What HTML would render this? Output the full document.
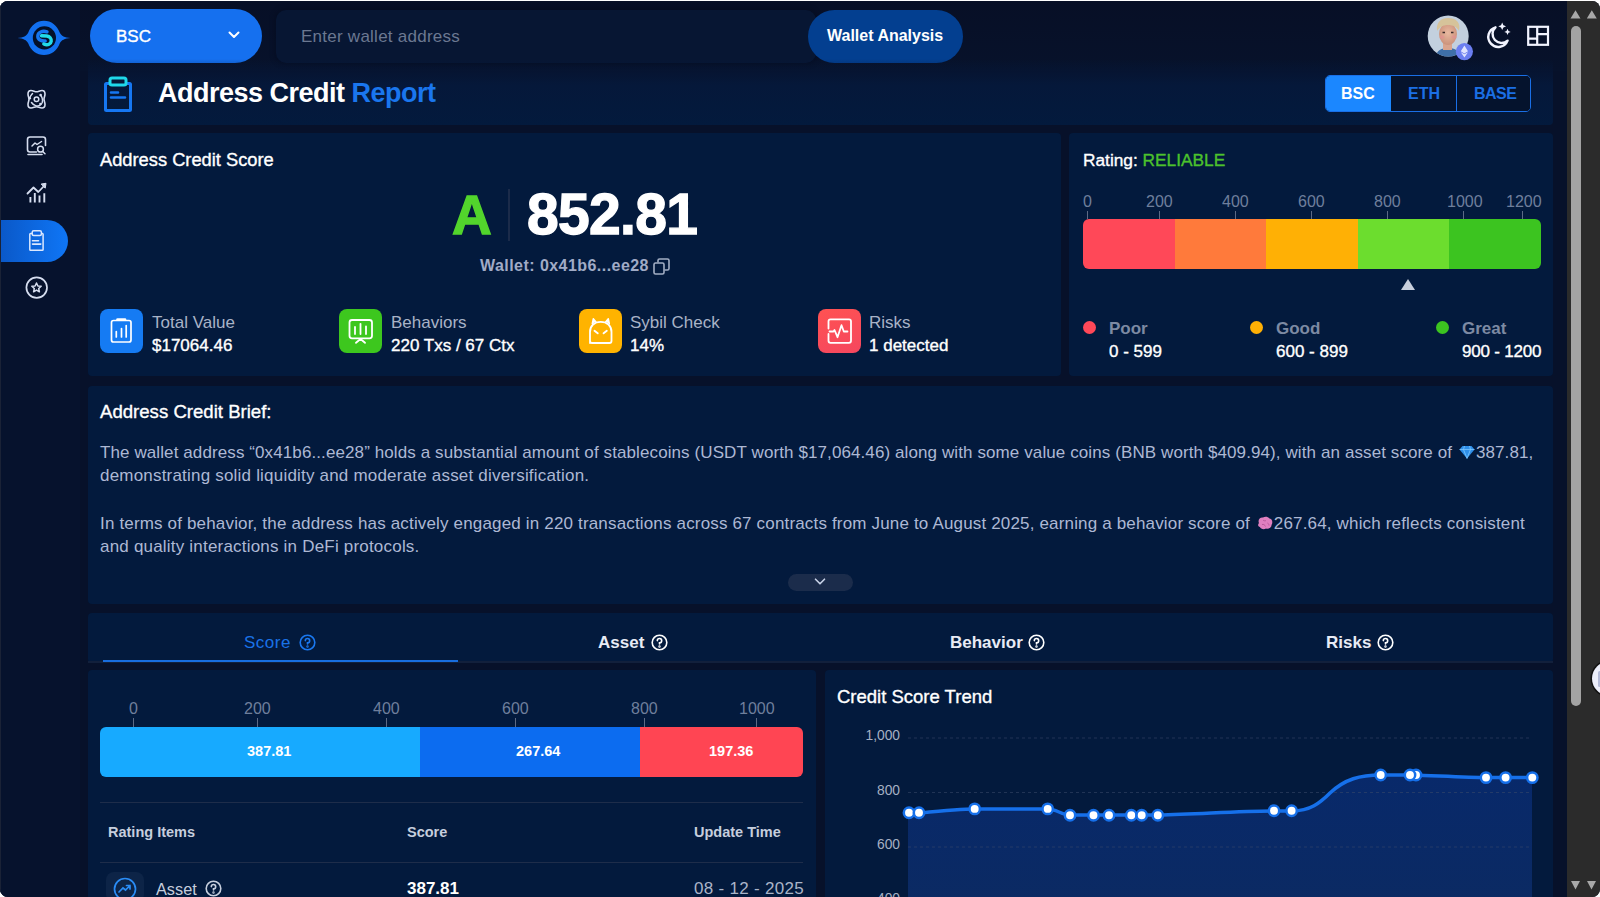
<!DOCTYPE html>
<html><head><meta charset="utf-8">
<style>
*{box-sizing:border-box;margin:0;padding:0}
html,body{width:1600px;height:897px;overflow:hidden;background:#fff;font-family:"Liberation Sans",sans-serif}
#win{position:absolute;left:0;top:1px;width:1600px;height:896px;border-radius:8px;overflow:hidden;background:#08132b;box-shadow:inset 1px 0 0 #1c2438}
.abs{position:absolute}
#side{left:0;top:0;width:80px;height:896px;background:#06122d}
#main{left:80px;top:0;width:1487px;height:896px;background:#07112a}
.card{position:absolute;background:#031a3d;border-radius:4px}
.t{position:absolute;white-space:nowrap;line-height:1}
.m{-webkit-text-stroke:0.35px currentColor}
#sb{left:1567px;top:0;width:33px;height:896px;background:#2b2b2b}
svg{position:absolute;overflow:visible}
</style></head><body>
<div id="win">
  <div id="side" class="abs"></div>
  <div id="main" class="abs"></div>

  <!-- TOPBAR -->
  <div class="abs" style="left:80px;top:0;width:1487px;height:70px;background:linear-gradient(180deg,#070f26 0,#07122b 100%)"></div>
  <!-- logo -->
  <svg style="left:0;top:0" width="80" height="70" viewBox="0 0 80 70">
    <path d="M17.5 37 C23.5 36.5 26.5 35 28.3 31.5 C30.8 24.5 36.8 19.8 44 19.8 C51.2 19.8 57.2 24.5 59.7 31.5 C61.5 35 64.5 36.5 70.5 37 C64.5 37.5 61.5 39 59.7 42.5 C57.2 49.5 51.2 54 44 54 C36.8 54 30.8 49.5 28.3 42.5 C26.5 39 23.5 37.5 17.5 37Z" fill="#1270f0"/>
    <circle cx="44.4" cy="36.9" r="11.6" fill="#041028"/>
    <path d="M47 30.8 C42.5 29.3 37.8 31.2 37.8 35.2 C37.8 38.7 41.2 40.2 45.2 40" stroke="#1577f2" stroke-width="3.4" fill="none" stroke-linecap="round"/>
    <path d="M41.5 34.8 L46.8 35 C49.8 35.4 51.5 37.6 51.2 40.3 C50.8 43.3 47.5 44.6 43.8 43" stroke="#22dbe8" stroke-width="3.4" fill="none" stroke-linecap="round"/>
  </svg>
  <!-- BSC pill -->
  <div class="abs" style="left:90px;top:8px;width:172px;height:54px;border-radius:27px;background:#1570ef"></div>
  <div class="t m" style="left:116px;top:27px;font-size:17px;color:#fff">BSC</div>
  <svg style="left:228px;top:30px" width="12" height="8" viewBox="0 0 12 8"><path d="M1.5 1.5 L6 6 L10.5 1.5" stroke="#fff" stroke-width="2" fill="none" stroke-linecap="round" stroke-linejoin="round"/></svg>
  <!-- input -->
  <div class="abs" style="left:276px;top:9px;width:540px;height:53px;background:#071633;border-radius:10px;box-shadow:0 0 5px 1px rgba(4,10,28,0.5)"></div>
  <div class="t" style="left:301px;top:27px;font-size:17px;color:#6b7891;letter-spacing:0.25px">Enter wallet address</div>
  <!-- wallet analysis -->
  <div class="abs" style="left:808px;top:9px;width:155px;height:53px;border-radius:27px;background:#033f90"></div>
  <div class="t" style="left:827px;top:27px;font-size:16px;font-weight:bold;color:#fff">Wallet Analysis</div>

  <!-- avatar -->
  <svg style="left:1420px;top:8px" width="140" height="56" viewBox="1420 8 140 56">
    <defs><clipPath id="avc"><circle cx="1448.2" cy="35" r="20.5"/></clipPath>
    <radialGradient id="skin" cx="0.5" cy="0.45" r="0.6"><stop offset="0" stop-color="#e8b9a0"/><stop offset="1" stop-color="#c98f78"/></radialGradient></defs>
    <g clip-path="url(#avc)">
      <rect x="1427" y="14" width="42" height="42" fill="#c3d0de"/>
      <path d="M1436 56 C1436 50 1441 47 1448 47 C1455 47 1460 50 1460 56Z" fill="#3f6fa8"/>
      <rect x="1443" y="41" width="9" height="8" fill="#d9a48e"/>
      <ellipse cx="1448" cy="33" rx="9" ry="11" fill="url(#skin)"/>
      <path d="M1437 30 C1436 21 1441 17 1448 17 C1456 17 1461 21 1459 30 C1457 26 1453 24 1448 24 C1443 24 1440 26 1437 30Z" fill="#d6c39a"/>
      <path d="M1442.5 31.5 H1445 M1451 31.5 H1453.5" stroke="#3a2a2a" stroke-width="1.4"/>
      <ellipse cx="1442" cy="36" rx="2.5" ry="1.8" fill="#e48f92" opacity="0.6"/>
      <ellipse cx="1454" cy="36" rx="2.5" ry="1.8" fill="#e48f92" opacity="0.6"/>
    </g>
    <circle cx="1464.4" cy="50.6" r="8.6" fill="#6b7ef0"/>
    <path d="M1464.4 44.5 L1468 50.3 L1464.4 52.4 L1460.8 50.3Z M1464.4 53.3 L1468 51.2 L1464.4 56.5 L1460.8 51.2Z" fill="#dfe3ff"/>
    <!-- moon -->
    <path d="M1495.5 26.3 A10 10 0 1 0 1507.6 39.6 A8.6 8.6 0 0 1 1495.5 26.3Z" stroke="#f2f4ff" stroke-width="2.4" fill="none" stroke-linejoin="round"/>
    <path d="M1502.2 21.5 L1503.4 24.2 L1506.1 25.3 L1503.4 26.4 L1502.2 29.1 L1501 26.4 L1498.3 25.3 L1501 24.2Z" fill="#f2f4ff"/>
    <path d="M1507.5 27.8 L1508.5 30 L1510.7 30.9 L1508.5 31.8 L1507.5 34 L1506.5 31.8 L1504.3 30.9 L1506.5 30Z" fill="#f2f4ff"/>
    <!-- layout -->
    <rect x="1528.2" y="25.8" width="19.8" height="18" fill="none" stroke="#f2f4ff" stroke-width="2.2"/>
    <path d="M1537.2 25.8 V43.8 M1528.2 37.6 H1537.2 M1537.2 33.2 H1548" stroke="#f2f4ff" stroke-width="2.2"/>
  </svg>

  <!-- SIDEBAR ICONS -->


  <!-- sidebar icons -->
  <div class="abs" style="left:0;top:219px;width:68px;height:42px;border-radius:0 21px 21px 0;background:linear-gradient(90deg,#0a58c8,#0f76f6)"></div>
  <svg style="left:0;top:0" width="80" height="320" viewBox="0 0 80 320" fill="none" stroke="#d6def0" stroke-linecap="round" stroke-linejoin="round">
    <!-- icon1 atom -->
    <path d="M31 89.5 C33.5 89.5 34.5 90.8 36.5 90.8 C38.5 90.8 39.5 89.5 42 89.5 C44.5 89.5 45 90.5 45 93 C45 95.5 44 96.5 44 98.3 C44 100 45 101 45 103.5 C45 106 44.5 107 42 107 C39.5 107 38.5 105.8 36.5 105.8 C34.5 105.8 33.5 107 31 107 C28.5 107 28 106 28 103.5 C28 101 29 100 29 98.3 C29 96.5 28 95.5 28 93 C28 90.5 28.5 89.5 31 89.5Z" stroke-width="1.6"/>
    <circle cx="36.5" cy="98.3" r="2.3" stroke-width="1.5"/>
    <path d="M31.5 101.5 C33.5 104.5 37.5 106 40.5 104 C43.5 102 43 97 40.5 94" stroke-width="1.5"/>
    <path d="M29.5 97.3 C30.5 94.5 31.5 93.5 32.5 92.5" stroke-width="1.5"/>
    <circle cx="40.6" cy="94" r="1.3" fill="#d6def0" stroke="none"/>
    <circle cx="40.4" cy="103" r="1.3" fill="#d6def0" stroke="none"/>
    <circle cx="29.7" cy="97.3" r="1.3" fill="#d6def0" stroke="none"/>
    <!-- icon2 monitor search -->
    <path d="M36.5 151 H30 A2.5 2.5 0 0 1 27.5 148.5 V138.5 A2.5 2.5 0 0 1 30 136 H43 A2.5 2.5 0 0 1 45.5 138.5 V144.5" stroke-width="1.6"/>
    <path d="M28 153.5 H42" stroke-width="1.6"/>
    <path d="M32 145 L35 142 L37 143.5 L41.5 140.5" stroke-width="1.5"/>
    <circle cx="40.5" cy="148.2" r="2.9" stroke-width="1.5"/>
    <path d="M42.7 150.5 L45 152.8" stroke-width="1.5"/>
    <!-- icon3 chart -->
    <path d="M30.4 196 V201.5 M34.8 192 V201.5 M39.5 194.5 V201.5 M44.3 192.2 V201.5" stroke-width="1.9" stroke-linecap="butt"/>
    <path d="M27.5 192.5 L33.5 186.5 L38.3 191 L44 185" stroke-width="1.8"/>
    <path d="M41.5 183 L46 182.3 L45.3 186.8Z" fill="#d6def0" stroke-width="1"/>
    <!-- icon4 clipboard -->
    <rect x="29.8" y="232.5" width="13.3" height="16.7" rx="0.8" stroke="#dbe8ff" stroke-width="1.5"/>
    <rect x="32.2" y="229.8" width="9.2" height="4.6" rx="1.5" stroke="#dbe8ff" stroke-width="1.5" fill="#0d66e6"/>
    <path d="M32.5 239.7 H38.5 M32.5 243.1 H40.8" stroke="#dbe8ff" stroke-width="1.6"/>
    <!-- icon5 star -->
    <circle cx="36.7" cy="286.6" r="10.3" stroke-width="1.7"/>
    <path d="M36.5 282 L37.9 285 L41.2 285.3 L38.7 287.5 L39.4 290.8 L36.5 289.1 L33.6 290.8 L34.3 287.5 L31.8 285.3 L35.1 285Z" stroke-width="1.5"/>
  </svg>

  <!-- HEADER CARD -->
  <div class="card" style="left:88px;top:58px;width:1465px;height:66px;background:linear-gradient(180deg,rgba(5,22,50,0) 0,#05183a 40%,#031a3d 100%);border-radius:0 0 4px 4px"></div>
  <svg style="left:102px;top:74px" width="32" height="38" viewBox="0 0 32 38" fill="none" stroke-linecap="round">
    <rect x="3.5" y="8.5" width="25" height="27" rx="1" stroke="#1677f2" stroke-width="3"/>
    <rect x="8" y="3" width="16" height="7" rx="2" stroke="#1fd8ea" stroke-width="3" fill="#071838"/>
    <path d="M9 17.5 H16 M9 22.5 H23" stroke="#1677f2" stroke-width="2.6"/>
  </svg>
  <div class="t" style="left:158px;top:79px;font-size:27px;font-weight:bold;color:#fff;letter-spacing:-0.5px">Address Credit <span style="color:#1a76ee">Report</span></div>
  <!-- segmented -->
  <div class="abs" style="left:1325px;top:74px;width:206px;height:37px;border:1px solid #1a6fe6;border-radius:5px;overflow:hidden">
    <div class="abs" style="left:0;top:0;width:205px;height:35px;background:#05132d"></div><div class="abs" style="left:0;top:0;width:65px;height:35px;background:#1b87ff"></div>
    <div class="abs" style="left:130px;top:0;width:1px;height:35px;background:#1a6fe6"></div>
  </div>
  <div class="t" style="left:1341px;top:85px;font-size:16px;font-weight:bold;color:#fff">BSC</div>
  <div class="t" style="left:1408px;top:85px;font-size:16px;font-weight:bold;color:#1b6fe4">ETH</div>
  <div class="t" style="left:1474px;top:85px;font-size:16px;font-weight:bold;color:#1b6fe4;letter-spacing:-0.5px">BASE</div>

  <!-- CARD A -->
  <div class="card" style="left:88px;top:132px;width:973px;height:243px"></div>
  <div class="t m" style="left:100px;top:150px;font-size:18.3px;color:#fff">Address Credit Score</div>
  <div class="t" style="left:452px;top:186.5px;font-size:55px;font-weight:bold;color:#52d52c;-webkit-text-stroke:1.4px #52d52c">A</div>
  <div class="abs" style="left:508px;top:188px;width:2px;height:52px;background:#1b2b4a"></div>
  <div class="t" style="left:527px;top:185px;font-size:57px;font-weight:bold;color:#fff;letter-spacing:-0.7px;-webkit-text-stroke:1.3px #fff">852.81</div>
  <div class="t" style="left:480px;top:257px;font-size:16px;font-weight:bold;color:#a0abc6;letter-spacing:0.45px">Wallet: 0x41b6...ee28</div>
  <svg style="left:653px;top:257px" width="17" height="17" viewBox="0 0 17 17" fill="none" stroke="#a3aec4" stroke-width="1.6">
    <rect x="1" y="5" width="10" height="11" rx="1.5"/><path d="M5 4.5 V2.5 A1.5 1.5 0 0 1 6.5 1 H14.5 A1.5 1.5 0 0 1 16 2.5 V10.5 A1.5 1.5 0 0 1 14.5 12 H11.5"/>
  </svg>
  <!-- stat icons -->
  <div class="abs" style="left:100px;top:308px;width:43px;height:44px;border-radius:8px;background:#157bf3"></div>
  <div class="abs" style="left:339px;top:308px;width:43px;height:44px;border-radius:8px;background:#3dc71e"></div>
  <div class="abs" style="left:579px;top:308px;width:43px;height:44px;border-radius:8px;background:#ffb300"></div>
  <div class="abs" style="left:818px;top:308px;width:43px;height:44px;border-radius:8px;background:linear-gradient(160deg,#ff5252,#f5475f)"></div>
  <svg style="left:0;top:0" width="900" height="360" viewBox="0 0 900 360" fill="none" stroke="#fff" stroke-linecap="round" stroke-linejoin="round">
    <rect x="111.5" y="319.5" width="19.5" height="21.5" rx="2" stroke-width="1.7"/>
    <path d="M117.5 318.5 H125" stroke-width="2.6"/>
    <path d="M116.3 330.5 V336 M121.5 327.5 V336 M126.2 324.5 V336" stroke-width="1.7"/>
    <rect x="349.5" y="319" width="22.5" height="18.3" rx="2.5" stroke-width="1.8"/>
    <path d="M355 326 V333 M360.5 322.8 V333 M366 325.5 V333" stroke-width="1.8"/>
    <path d="M356 341.8 L360.5 338 L365 341.8" stroke-width="1.8"/>
    <path d="M590 342 V331 C590 324.5 594.5 320.8 600.7 320.8 C607 320.8 611.5 324.5 611.5 331 V340 A2 2 0 0 1 609.5 342 H592 A2 2 0 0 1 590 340" stroke-width="1.8"/>
    <path d="M592.3 322.6 L593.3 317.8 L596 321" stroke-width="1.5" fill="#fff"/>
    <path d="M609.3 322.6 L608.3 317.8 L605.6 321" stroke-width="1.5" fill="#fff"/>
    <path d="M594.5 329.8 L597.7 332.3 M606.8 329.8 L603.6 332.3" stroke-width="1.9"/>
    <path d="M828.5 327.5 V320.3 A2 2 0 0 1 830.5 318.3 H849 A2 2 0 0 1 851 320.3 V339.8 A2 2 0 0 1 849 341.8 H830.5 A2 2 0 0 1 828.5 339.8 V333" stroke-width="1.8"/>
    <path d="M829.5 330.5 H833.5 L834.5 329 L837.5 336.2 L841.5 324.2 L843.8 330.5 H847.5" stroke-width="1.8"/>
  </svg>
  <div class="t" style="left:152px;top:313px;font-size:17px;color:#a9b3c7">Total Value</div>
  <div class="t m" style="left:152px;top:336px;font-size:17px;color:#fff">$17064.46</div>
  <div class="t" style="left:391px;top:313px;font-size:17px;color:#a9b3c7">Behaviors</div>
  <div class="t m" style="left:391px;top:336px;font-size:17px;color:#fff">220 Txs / 67 Ctx</div>
  <div class="t" style="left:630px;top:313px;font-size:17px;color:#a9b3c7">Sybil Check</div>
  <div class="t m" style="left:630px;top:336px;font-size:17px;color:#fff">14%</div>
  <div class="t" style="left:869px;top:313px;font-size:17px;color:#a9b3c7">Risks</div>
  <div class="t m" style="left:869px;top:336px;font-size:17px;color:#fff">1 detected</div>

  <!-- CARD B -->
  <div class="card" style="left:1069px;top:132px;width:484px;height:243px"></div>
  <div class="t m" style="left:1083px;top:150.5px;font-size:17.3px;color:#fff">Rating: <span style="color:#4cc22c">RELIABLE</span></div>
  <div class="t" style="left:1083px;top:193px;font-size:16px;color:#6f7f9c">0</div>
  <div class="t" style="left:1146px;top:193px;font-size:16px;color:#6f7f9c">200</div>
  <div class="t" style="left:1222px;top:193px;font-size:16px;color:#6f7f9c">400</div>
  <div class="t" style="left:1298px;top:193px;font-size:16px;color:#6f7f9c">600</div>
  <div class="t" style="left:1374px;top:193px;font-size:16px;color:#6f7f9c">800</div>
  <div class="t" style="left:1447px;top:193px;font-size:16px;color:#6f7f9c">1000</div>
  <div class="t" style="left:1506px;top:193px;font-size:16px;color:#6f7f9c">1200</div>
  <div class="abs" style="left:1087px;top:210px;width:1px;height:8px;background:#5d6a85"></div>
  <div class="abs" style="left:1159px;top:210px;width:1px;height:8px;background:#5d6a85"></div>
  <div class="abs" style="left:1235px;top:210px;width:1px;height:8px;background:#5d6a85"></div>
  <div class="abs" style="left:1311px;top:210px;width:1px;height:8px;background:#5d6a85"></div>
  <div class="abs" style="left:1387px;top:210px;width:1px;height:8px;background:#5d6a85"></div>
  <div class="abs" style="left:1463px;top:210px;width:1px;height:8px;background:#5d6a85"></div>
  <div class="abs" style="left:1522px;top:210px;width:1px;height:8px;background:#5d6a85"></div>
  <div class="abs" style="left:1083px;top:218px;width:458px;height:50px;border-radius:6px;overflow:hidden;display:flex">
    <div style="width:92px;background:#ff4858"></div><div style="width:91px;background:#ff7a3b"></div><div style="width:92px;background:#ffb005"></div><div style="width:91px;background:#6cdd2e"></div><div style="width:92px;background:#3cc420"></div>
  </div>
  <svg style="left:1401px;top:278px" width="14" height="11" viewBox="0 0 14 11"><path d="M7 0 L14 11 H0Z" fill="#c8cfdc"/></svg>
  <div class="abs" style="left:1083px;top:320px;width:13px;height:13px;border-radius:50%;background:#ff4858"></div>
  <div class="abs" style="left:1250px;top:320px;width:13px;height:13px;border-radius:50%;background:#ffb005"></div>
  <div class="abs" style="left:1436px;top:320px;width:13px;height:13px;border-radius:50%;background:#3cc420"></div>
  <div class="t" style="left:1109px;top:319px;font-size:17px;font-weight:bold;color:#7d8aa3">Poor</div>
  <div class="t" style="left:1276px;top:319px;font-size:17px;font-weight:bold;color:#7d8aa3">Good</div>
  <div class="t" style="left:1462px;top:319px;font-size:17px;font-weight:bold;color:#7d8aa3">Great</div>
  <div class="t m" style="left:1109px;top:342px;font-size:17px;color:#fff">0 - 599</div>
  <div class="t m" style="left:1276px;top:342px;font-size:17px;color:#fff">600 - 899</div>
  <div class="t m" style="left:1462px;top:342px;font-size:17px;color:#fff;letter-spacing:-0.2px">900 - 1200</div>

  <!-- BRIEF -->
  <div class="card" style="left:88px;top:385px;width:1465px;height:218px"></div>
  <div class="t m" style="left:100px;top:402px;font-size:18.6px;color:#fff">Address Credit Brief:</div>
  <div class="t" id="l1" style="left:100px;top:443px;font-size:17px;color:#adb8d4;letter-spacing:0.1px">The wallet address &#8220;0x41b6...ee28&#8221; holds a substantial amount of stablecoins (USDT worth $17,064.46) along with some value coins (BNB worth $409.94), with an asset score of <span style="display:inline-block;width:19px;height:14px;vertical-align:-1px;position:relative"><svg style="left:2px;top:0" width="16" height="14" viewBox="0 0 16 14"><path d="M3.5 1 H12.5 L15.5 4.5 L8 13.5 L0.5 4.5Z" fill="#2f8fe8"/><path d="M0.5 4.5 H15.5 M5.5 1 L4.5 4.5 L8 13.5 L11.5 4.5 L10.5 1" stroke="#7cc7ff" stroke-width="0.8" fill="none"/></svg></span>387.81,</div>
  <div class="t" id="l2" style="left:100px;top:466px;font-size:17px;color:#adb8d4;letter-spacing:0.2px">demonstrating solid liquidity and moderate asset diversification.</div>
  <div class="t" id="l3" style="left:100px;top:514px;font-size:17px;color:#adb8d4;letter-spacing:0.165px">In terms of behavior, the address has actively engaged in 220 transactions across 67 contracts from June to August 2025, earning a behavior score of <span style="display:inline-block;width:19px;height:14px;vertical-align:-1px;position:relative"><svg style="left:2px;top:0" width="16" height="14" viewBox="0 0 16 14"><path d="M2 7 C0.5 4 3 1 6 1.5 C8 0 11 0.5 12.5 2.5 C15.5 3 16 7 14.5 9 C14.5 12 11 13.5 9 12.5 C7 14 3.5 13 3 11 C1 10.5 0.5 8.5 2 7Z" fill="#e07fc0"/><path d="M6 4 C7 5 8 5 9 4.5 M5 8.5 C6.5 8 8 9 8.5 10.5 M10.5 7 C11.5 7.5 12 8.5 12 9.5" stroke="#b04f90" stroke-width="0.8" fill="none"/></svg></span>267.64, which reflects consistent</div>
  <div class="t" id="l4" style="left:100px;top:537px;font-size:17px;color:#adb8d4;letter-spacing:0.2px">and quality interactions in DeFi protocols.</div>
  <div class="abs" style="left:788px;top:573px;width:65px;height:17px;border-radius:9px;background:#1b2c4b"></div>
  <svg style="left:814px;top:577px" width="12" height="8" viewBox="0 0 12 8"><path d="M1.5 1.2 L6 5.8 L10.5 1.2" stroke="#c8d3e8" stroke-width="1.6" fill="none" stroke-linecap="round" stroke-linejoin="round"/></svg>

  <!-- TABS -->
  <div class="card" style="left:88px;top:612px;width:1465px;height:50px"></div>
  <div class="abs" style="left:88px;top:660px;width:1465px;height:2px;background:#12203c"></div>
  <div class="abs" style="left:103px;top:658.5px;width:355px;height:2.5px;background:#186ddf"></div>
  <div class="t" style="left:244px;top:633px;font-size:17px;color:#1a72e8;letter-spacing:0.5px">Score</div>
  <div class="t" style="left:598px;top:633px;font-size:17px;font-weight:bold;color:#e8ebf5">Asset</div>
  <div class="t" style="left:950px;top:633px;font-size:17px;font-weight:bold;color:#e8ebf5">Behavior</div>
  <div class="t" style="left:1326px;top:633px;font-size:17px;font-weight:bold;color:#e8ebf5">Risks</div>
  <svg style="left:299px;top:633px" width="17" height="17" viewBox="0 0 17 17" fill="none" stroke="#1a78f0" stroke-width="1.6" stroke-linecap="round"><circle cx="8.5" cy="8.5" r="7.3"/><path d="M6.3 6.6 A2.2 2.2 0 1 1 8.5 8.9 V10"/><circle cx="8.5" cy="12.5" r="0.4" fill="#1a78f0"/></svg>
  <svg style="left:651px;top:633px" width="17" height="17" viewBox="0 0 17 17" fill="none" stroke="#fff" stroke-width="1.6" stroke-linecap="round"><circle cx="8.5" cy="8.5" r="7.3"/><path d="M6.3 6.6 A2.2 2.2 0 1 1 8.5 8.9 V10"/><circle cx="8.5" cy="12.5" r="0.4" fill="#fff"/></svg>
  <svg style="left:1028px;top:633px" width="17" height="17" viewBox="0 0 17 17" fill="none" stroke="#fff" stroke-width="1.6" stroke-linecap="round"><circle cx="8.5" cy="8.5" r="7.3"/><path d="M6.3 6.6 A2.2 2.2 0 1 1 8.5 8.9 V10"/><circle cx="8.5" cy="12.5" r="0.4" fill="#fff"/></svg>
  <svg style="left:1377px;top:633px" width="17" height="17" viewBox="0 0 17 17" fill="none" stroke="#fff" stroke-width="1.6" stroke-linecap="round"><circle cx="8.5" cy="8.5" r="7.3"/><path d="M6.3 6.6 A2.2 2.2 0 1 1 8.5 8.9 V10"/><circle cx="8.5" cy="12.5" r="0.4" fill="#fff"/></svg>

  <!-- BOTTOM LEFT -->
  <div class="card" style="left:88px;top:669px;width:728px;height:240px"></div>
  <div class="t" style="left:129px;top:700px;font-size:16px;color:#6f7f9c">0</div>
  <div class="t" style="left:244px;top:700px;font-size:16px;color:#6f7f9c">200</div>
  <div class="t" style="left:373px;top:700px;font-size:16px;color:#6f7f9c">400</div>
  <div class="t" style="left:502px;top:700px;font-size:16px;color:#6f7f9c">600</div>
  <div class="t" style="left:631px;top:700px;font-size:16px;color:#6f7f9c">800</div>
  <div class="t" style="left:739px;top:700px;font-size:16px;color:#6f7f9c">1000</div>
  <div class="abs" style="left:133px;top:717px;width:1px;height:9px;background:#5d6a85"></div>
  <div class="abs" style="left:257px;top:717px;width:1px;height:9px;background:#5d6a85"></div>
  <div class="abs" style="left:386px;top:717px;width:1px;height:9px;background:#5d6a85"></div>
  <div class="abs" style="left:515px;top:717px;width:1px;height:9px;background:#5d6a85"></div>
  <div class="abs" style="left:644px;top:717px;width:1px;height:9px;background:#5d6a85"></div>
  <div class="abs" style="left:756px;top:717px;width:1px;height:9px;background:#5d6a85"></div>
  <div class="abs" style="left:100px;top:726px;width:703px;height:50px;border-radius:6px;overflow:hidden;display:flex">
    <div style="width:320px;background:#17aaff"></div><div style="width:220px;background:#0c6cf0"></div><div style="width:163px;background:#ff4553"></div>
  </div>
  <div class="t" style="left:247px;top:743px;font-size:14.5px;font-weight:bold;color:#fff">387.81</div>
  <div class="t" style="left:516px;top:743px;font-size:14.5px;font-weight:bold;color:#fff">267.64</div>
  <div class="t" style="left:709px;top:743px;font-size:14.5px;font-weight:bold;color:#fff">197.36</div>
  <div class="abs" style="left:100px;top:801px;width:703px;height:1px;background:#1e2d4a"></div>
  <div class="t" style="left:108px;top:824px;font-size:14.5px;font-weight:bold;color:#c6cedd">Rating Items</div>
  <div class="t" style="left:407px;top:824px;font-size:14.5px;font-weight:bold;color:#c6cedd">Score</div>
  <div class="t" style="left:694px;top:824px;font-size:14.5px;font-weight:bold;color:#c6cedd">Update Time</div>
  <div class="abs" style="left:100px;top:861px;width:703px;height:1px;background:#1e2d4a"></div>
  <div class="abs" style="left:106px;top:871px;width:38px;height:30px;border-radius:8px;background:#0d2447"></div>
  <svg style="left:113px;top:876px" width="24" height="24" viewBox="0 0 24 24" fill="none" stroke="#2a8cf5" stroke-width="1.7" stroke-linecap="round"><circle cx="12" cy="12" r="10.5"/><path d="M6 15 L10 11 L12.5 13 L17 8.5 M13.5 8.5 H17 V12"/></svg>
  <div class="t" style="left:156px;top:880px;font-size:16.3px;color:#c6cedd">Asset</div>
  <svg style="left:205px;top:879px" width="17" height="17" viewBox="0 0 17 17" fill="none" stroke="#c6cedd" stroke-width="1.6" stroke-linecap="round"><circle cx="8.5" cy="8.5" r="7.3"/><path d="M6.3 6.6 A2.2 2.2 0 1 1 8.5 8.9 V10"/><circle cx="8.5" cy="12.5" r="0.4" fill="#c6cedd"/></svg>
  <div class="t" style="left:407px;top:879px;font-size:17px;font-weight:bold;color:#fff">387.81</div>
  <div class="t" style="left:694px;top:879px;font-size:17px;color:#aab4c8;letter-spacing:0.3px">08 - 12 - 2025</div>

  <!-- BOTTOM RIGHT -->
  <div class="card" style="left:825px;top:669px;width:728px;height:240px"></div>
  <div class="t m" style="left:837px;top:687px;font-size:18.5px;color:#fff">Credit Score Trend</div>
  <div class="t" style="left:800px;width:100px;text-align:right;top:728px;font-size:13.8px;color:#a6b0c3">1,000</div>
  <div class="t" style="left:800px;width:100px;text-align:right;top:783px;font-size:13.8px;color:#a6b0c3">800</div>
  <div class="t" style="left:800px;width:100px;text-align:right;top:837px;font-size:13.8px;color:#a6b0c3">600</div>
  <div class="t" style="left:800px;width:100px;text-align:right;top:891px;font-size:13.8px;color:#a6b0c3">400</div>
  <svg style="left:825px;top:670px" width="728" height="230" viewBox="825 670 728 230">
    <defs><linearGradient id="ar" x1="0" y1="0" x2="0" y2="1"><stop offset="0" stop-color="#08296a"/><stop offset="1" stop-color="#0b2a63"/></linearGradient></defs>
    <path d="M908 812 L920 812 C940 810 960 808 975 808 L1048 808 C1056 808 1062 814 1070 814 L1158 814 C1200 813 1240 810 1274 810 L1292 810 C1310 810 1320 802 1330 792 C1345 778 1360 774 1381 774 L1413 774 C1440 775 1470 776.6 1486 776.6 L1532 776.6 V900 H908Z" fill="url(#ar)"/>
    <path d="M908 737 H1532 M908 791.5 H1532 M908 846 H1532" stroke="#3a4a6a" stroke-opacity="0.55" stroke-width="1" stroke-dasharray="3 3"/>
    <path d="M908 812 L920 812 C940 810 960 808 975 808 L1048 808 C1056 808 1062 814 1070 814 L1158 814 C1200 813 1240 810 1274 810 L1292 810 C1310 810 1320 802 1330 792 C1345 778 1360 774 1381 774 L1413 774 C1440 775 1470 776.6 1486 776.6 L1532 776.6" stroke="#1670ea" stroke-width="3.5" fill="none"/>
    <g fill="#fff" stroke="#1670ea" stroke-width="2.5"><circle cx="909" cy="811.8" r="5.2"/><circle cx="919" cy="811.8" r="5.2"/><circle cx="974.7" cy="807.9" r="5.2"/><circle cx="1047.7" cy="807.9" r="5.2"/><circle cx="1070" cy="814.3" r="5.2"/><circle cx="1093.5" cy="814.3" r="5.2"/><circle cx="1109" cy="814.3" r="5.2"/><circle cx="1131.3" cy="814.3" r="5.2"/><circle cx="1141.7" cy="814.3" r="5.2"/><circle cx="1157.8" cy="814.3" r="5.2"/><circle cx="1274" cy="809.7" r="5.2"/><circle cx="1291.6" cy="809.7" r="5.2"/><circle cx="1380.7" cy="774" r="5.2"/><circle cx="1416" cy="774" r="5.2"/><circle cx="1410" cy="774" r="5.2"/><circle cx="1486" cy="776.6" r="5.2"/><circle cx="1505.6" cy="776.6" r="5.2"/><circle cx="1532.3" cy="776.6" r="5.2"/></g>
  </svg>

  <div id="sb" class="abs"></div>
  <div class="abs" style="left:1571px;top:25px;width:10px;height:680px;border-radius:5px;background:#a3a3a3"></div>
  <svg style="left:1567px;top:0" width="33" height="897" viewBox="0 0 33 897">
    <path d="M3.5 17.5 L8.5 9.3 L13.5 17.5Z M19.8 17.5 L24.8 9.3 L29.8 17.5Z" fill="#a8a8a8"/>
    <path d="M4 880 L8.5 888.5 L13 880Z M20 880 L24.5 888.5 L29 880Z" fill="#a8a8a8"/>
  </svg>

  <div class="abs" style="left:1592px;top:660px;width:36px;height:35px;border-radius:50%;background:#eceefa;box-shadow:0 0 0 1.5px #111"></div>
  <div class="abs" style="left:1598px;top:670px;width:3px;height:16px;border-radius:2px;background:#b4bbd8"></div>
  <div class="abs" style="left:0;top:0;width:1px;height:896px;background:#1a2236"></div>
</div>
</body></html>
